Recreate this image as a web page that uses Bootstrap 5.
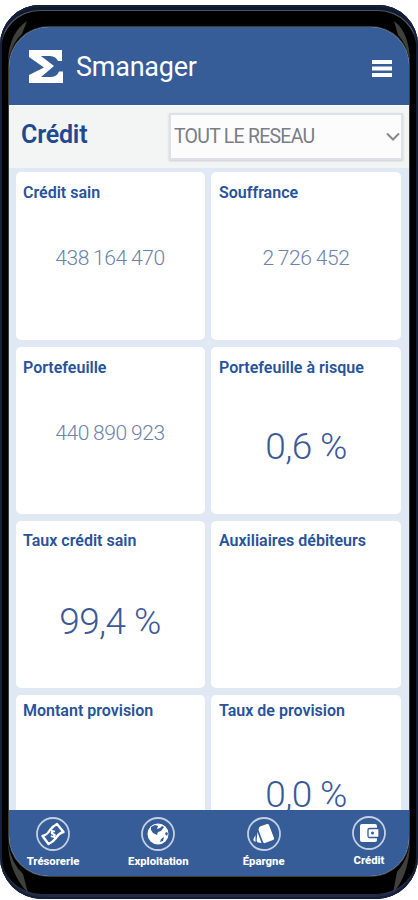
<!DOCTYPE html>
<html lang="fr">
<head>
<meta charset="utf-8">
<meta name="viewport" content="width=device-width, initial-scale=1">
<title>Smanager</title>
<link href="https://cdn.jsdelivr.net/npm/bootstrap@5.3.0/dist/css/bootstrap.min.css" rel="stylesheet">
<style>
body{font-family:Roboto,"Liberation Sans",sans-serif;background:#fff;height:900px;padding-top:5px;color:#1f4a90;overflow:hidden}
.phone{height:894px;background:#000;border-radius:40px 40px 42px 42px;padding:22px 9px 23px 9px;
 box-shadow:inset 0 0 0 2px #14203a,inset 0 6px 0 -1px #111a2c,inset 0 5px 0 1px #4a5267,inset 0 -5px 0 0 #222b44}
.screen{height:849px;border-radius:40px 38px 38px 40px;background:#e0e8f4;box-shadow:0 0 0 1px #3c3d35}
.glint{left:0;top:0;pointer-events:none}
.top-bar{height:78px;background:#365d98;color:#fff;padding:2px 17px 0 19px}
.brand-text{font-size:27px;line-height:32px;margin-left:12px;letter-spacing:-.25px}
.filter-bar{height:63px;background:#f3f4f4;border-top:1px solid #fff;padding:7px 6px 0 12px}
.page-title{font-size:25px;font-weight:600;line-height:30px;margin-top:7px;letter-spacing:-.2px}
.network{width:234px;height:47px;border:2px solid #dde2ea;background:#fcfcfd;color:#7b7d84;font-size:19.5px;letter-spacing:-.75px;padding:0 0 0 3px;box-shadow:0 1px 2px #c9cdd2}
.tiles{padding:4px 8px 0 7px;display:grid;grid-template-columns:189px 190px;gap:7px 6px;grid-template-rows:168px 167px 167px 167px;height:642px}
.tile{background:#fff;border-radius:5px;padding:11px 8px 0 7px}
.tile h2{font-size:16px;font-weight:600;line-height:19px;margin:0;white-space:nowrap;color:#28539a}
.tile.odd-title{padding-top:10px}
.tile.low{padding-top:6px}
.tile.low .rate{margin-top:53px}
.tile.odd-title .rate{margin-top:50px}
.amount{font-size:21px;font-weight:300;line-height:26px;text-align:center;color:#6c82ae;margin-top:43px;letter-spacing:-.4px;word-spacing:-.6px}
.rate{font-size:37px;font-weight:300;line-height:44px;text-align:center;margin-top:48px;color:#3b5998;letter-spacing:-.6px}
.tab-bar{height:66px;background:#365d98;padding-left:4px}
.tab-bar a{width:80px;font-size:11.300px;font-weight:800;line-height:13px;color:#fff;padding-top:7px}
.tab-bar a:last-child{padding-top:6px}
.tab-bar svg{margin-bottom:4px}
</style>
</head>
<body>
<main class="phone position-relative"><div class="screen overflow-hidden d-flex flex-column">
<header class="top-bar d-flex align-items-center flex-shrink-0">
<svg width="36" height="34" viewBox="0 0 36 34" fill="#fff"><path d="M1 0H34V11H30Q28 6.500 22 6H13L26 16L13 27H23Q29 26.500 31 21.500H35V33H1V25L16 17.500L1 7Z"/></svg>
<span class="brand-text">Smanager</span>
<svg class="ms-auto mt-1" width="20" height="18" viewBox="0 0 20 18" fill="#fff"><path d="M0 0H20V4H0ZM0 6.500H20V10.500H0ZM0 13H20V17H0Z"/></svg>
</header>
<section class="filter-bar d-flex justify-content-between flex-shrink-0">
<h1 class="page-title">Crédit</h1>
<div class="network d-flex align-items-center justify-content-between"><span>TOUT LE RESEAU</span><svg width="16" height="10" viewBox="0 0 16 10" fill="none" stroke="#888" stroke-width="2"><path d="M2 1.500L8 7.500L14 1.500"/></svg></div>
</section>
<section class="tiles overflow-hidden flex-shrink-0">
<article class="tile"><h2>Crédit sain</h2><div class="amount">438 164 470</div></article>
<article class="tile ps-2"><h2>Souffrance</h2><div class="amount">2 726 452</div></article>
<article class="tile"><h2>Portefeuille</h2><div class="amount">440 890 923</div></article>
<article class="tile ps-2"><h2>Portefeuille à risque</h2><div class="rate">0,6 %</div></article>
<article class="tile odd-title"><h2>Taux crédit sain</h2><div class="rate">99,4 %</div></article>
<article class="tile odd-title ps-2"><h2>Auxiliaires débiteurs</h2></article>
<article class="tile low"><h2>Montant provision</h2></article>
<article class="tile low ps-2"><h2>Taux de provision</h2><div class="rate">0,0 %</div></article>
</section>
<nav class="tab-bar d-flex justify-content-between flex-shrink-0">
<a href="#" class="d-flex flex-column align-items-center text-decoration-none">
<svg width="34" height="34" viewBox="0 0 34 34" fill="none" stroke="#fff"><circle cx="17" cy="17" r="16" stroke="#c3cfe2" stroke-width="1.800"/><path d="M6.500 19Q11 18 14 13Q17 9 21 7L27.500 15Q23 16 20 21Q17 25 12.500 27Z" stroke-width="2.400" stroke-linejoin="round"/><path d="M19 14.500Q16 13 15.500 15.500Q15.500 17 17.500 17Q20 17.500 18.500 19.500Q17 20.500 15 19M15.500 13L19 21" stroke-width="1.600"/></svg>
<span>Trésorerie</span></a>
<a href="#" class="d-flex flex-column align-items-center text-decoration-none">
<svg width="34" height="34" viewBox="0 0 34 34"><circle cx="17" cy="17" r="16" fill="none" stroke="#c3cfe2" stroke-width="1.800"/><circle cx="17" cy="17" r="10.500" fill="#fff"/><path d="M10 10L14 8L17 9L16 12L19 11L21 9L23 10L20 14L17 15L16 18L12 16L10 13ZM20 22L23 20L22 24L19 25ZM25 15L27 16L26 19L24 17Z" fill="#365d98"/></svg>
<span>Exploitation</span></a>
<a href="#" class="d-flex flex-column align-items-center text-decoration-none">
<svg width="34" height="34" viewBox="0 0 34 34"><circle cx="17" cy="17" r="16" fill="none" stroke="#c3cfe2" stroke-width="1.800"/><g fill="#fff"><path d="M12 11Q12 10 13 9.500L20 7Q21.500 6.500 22 8L27 21Q27.500 22.500 26 23L18 26Q16.500 26.500 16 25L11.500 13Z"/><path d="M10.500 15L14.500 26L11 25.500Q9.500 25 9.700 23ZM8.500 18V25L7 24Q6 23 6.700 21.500Z"/></g></svg>
<span>Épargne</span></a>
<a href="#" class="d-flex flex-column align-items-center text-decoration-none">
<svg width="34" height="34" viewBox="0 0 34 34"><circle cx="17" cy="17" r="16" fill="none" stroke="#c3cfe2" stroke-width="1.800"/><path d="M10 8H23Q25 8 25 10V24Q25 26 23 26H10Q8 26 8 24V10Q8 8 10 8Z" fill="#fff"/><path d="M27 12.500H17.500Q16 12.500 16 14V20Q16 21.500 17.500 21.500H27Z" fill="#fff" stroke="#365d98" stroke-width="1.300"/><circle cx="20.500" cy="17" r="1.500" fill="#365d98"/></svg>
<span>Crédit</span></a>
</nav>
</div>
<svg class="glint position-absolute" width="418" height="894" viewBox="0 0 418 894" fill="#3f403b"><path d="M27 16Q9 28 8 56Q13 36 22 29ZM394 16Q409 27 410 56Q406 38 398 30ZM8 838Q9 868 28 888L23 869Q11 858 8 838ZM410 838Q409 870 393 888L397 867Q407 856 410 838Z"/></svg>
</main>
<script src="https://cdn.jsdelivr.net/npm/bootstrap@5.3.0/dist/js/bootstrap.bundle.min.js"></script>
</body>
</html>
